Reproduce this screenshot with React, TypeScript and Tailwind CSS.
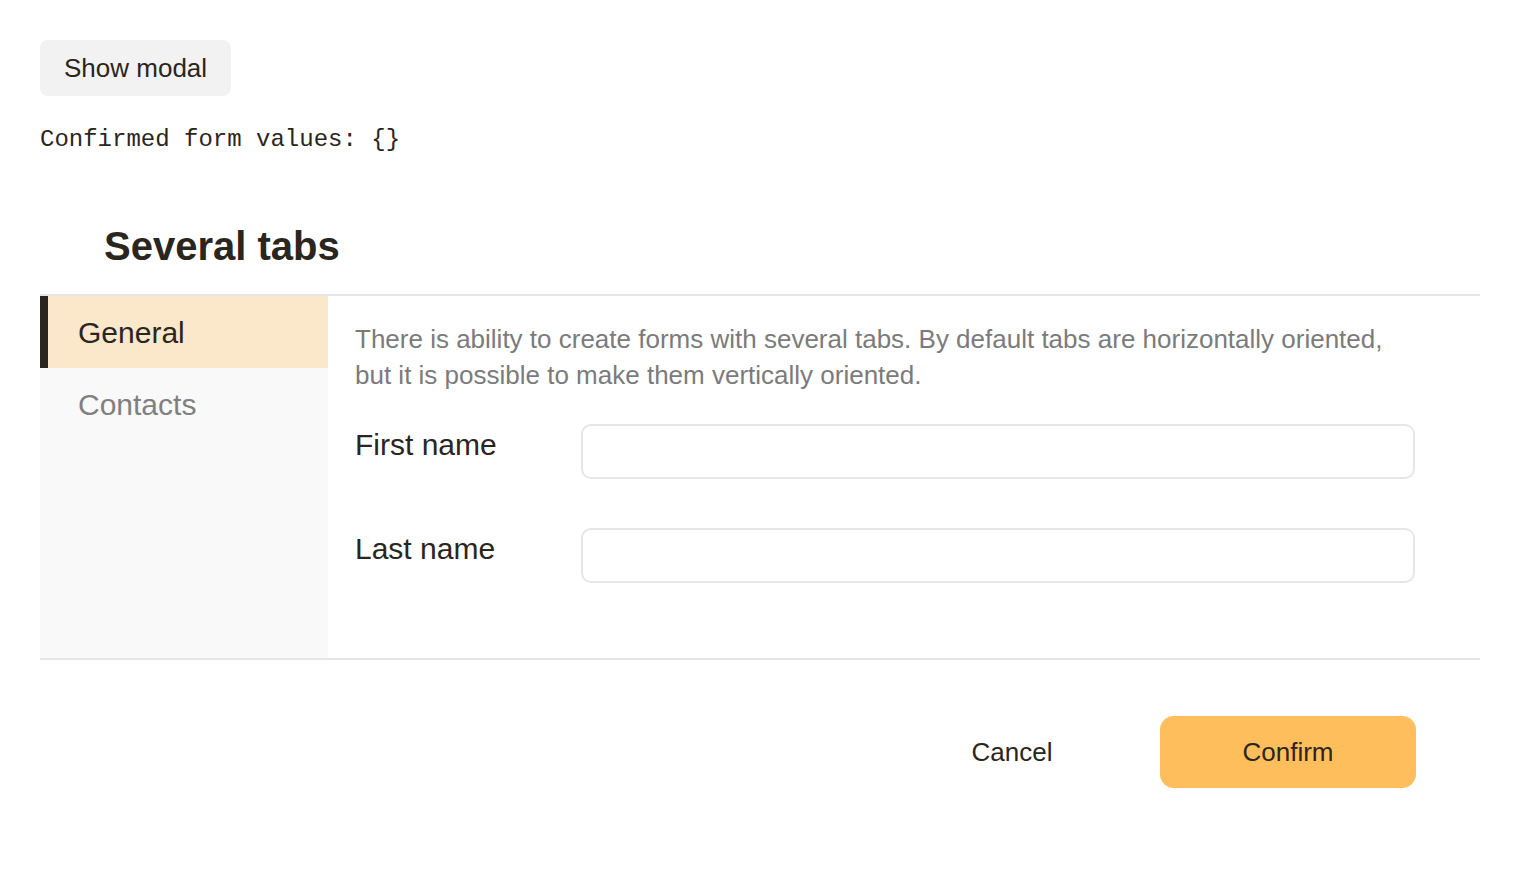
import { useState } from 'react'

const TABS = ['General', 'Contacts']

export default function App() {
  const [tab, setTab] = useState(0)

  return (
    <div className="min-h-screen bg-white px-10 pt-10 text-[#2b2520] font-['Liberation_Sans',Arial,sans-serif]">
      <button className="h-14 px-6 rounded-lg bg-[#f2f2f2] text-[26px] leading-none text-[#2b2520]">
        Show modal
      </button>

      <pre className="mt-[28px] text-[24px] leading-8 font-['Liberation_Mono',monospace] text-[#2b2520]">
        Confirmed form values: {'{}'}
      </pre>

      <h2 className="mt-[66px] pl-16 text-[40px] leading-[48px] font-bold">Several tabs</h2>

      <div className="mt-[24px] flex border-y-2 border-[#e6e6e6]">
        <div className="w-[288px] shrink-0 bg-[#f9f9f9]">
          {TABS.map((t, i) => (
            <button
              key={t}
              onClick={() => setTab(i)}
              className={
                i === tab
                  ? 'flex h-[72px] w-full items-center border-l-8 border-[#2b2520] bg-[#fbe7c9] pl-[30px] text-left text-[30px] text-[#2b2520]'
                  : 'flex h-[72px] w-full items-center pl-[38px] text-left text-[30px] text-[#808080]'
              }
            >
              {t}
            </button>
          ))}
        </div>

        <div className="flex-1 pl-[27px] pr-[65px] pt-[25px] pb-[75px]">
          <p className="text-[26px] leading-[36px] text-[#7b7b7b]">
            There is ability to create forms with several tabs. By default tabs are horizontally oriented,
            but it is possible to make them vertically oriented.
          </p>

          <div className="mt-[31px] flex flex-col gap-[49px]">
            {['First name', 'Last name'].map(l => (
              <label key={l} className="flex items-start">
                <span className="w-[226px] shrink-0 pt-[2px] text-[30px] leading-[38px]">{l}</span>
                <input className="h-[55px] flex-1 rounded-[10px] border-2 border-[#e6e6e6] bg-white px-4 text-[26px] outline-none" />
              </label>
            ))}
          </div>
        </div>
      </div>

      <div className="flex justify-end gap-5 pr-16 pt-[56px]">
        <button className="h-[72px] w-64 rounded-[14px] text-[26px] text-[#2b2520]">Cancel</button>
        <button className="h-[72px] w-64 rounded-[14px] bg-[#ffbe5c] text-[26px] text-[#2b2520]">Confirm</button>
      </div>
    </div>
  )
}
